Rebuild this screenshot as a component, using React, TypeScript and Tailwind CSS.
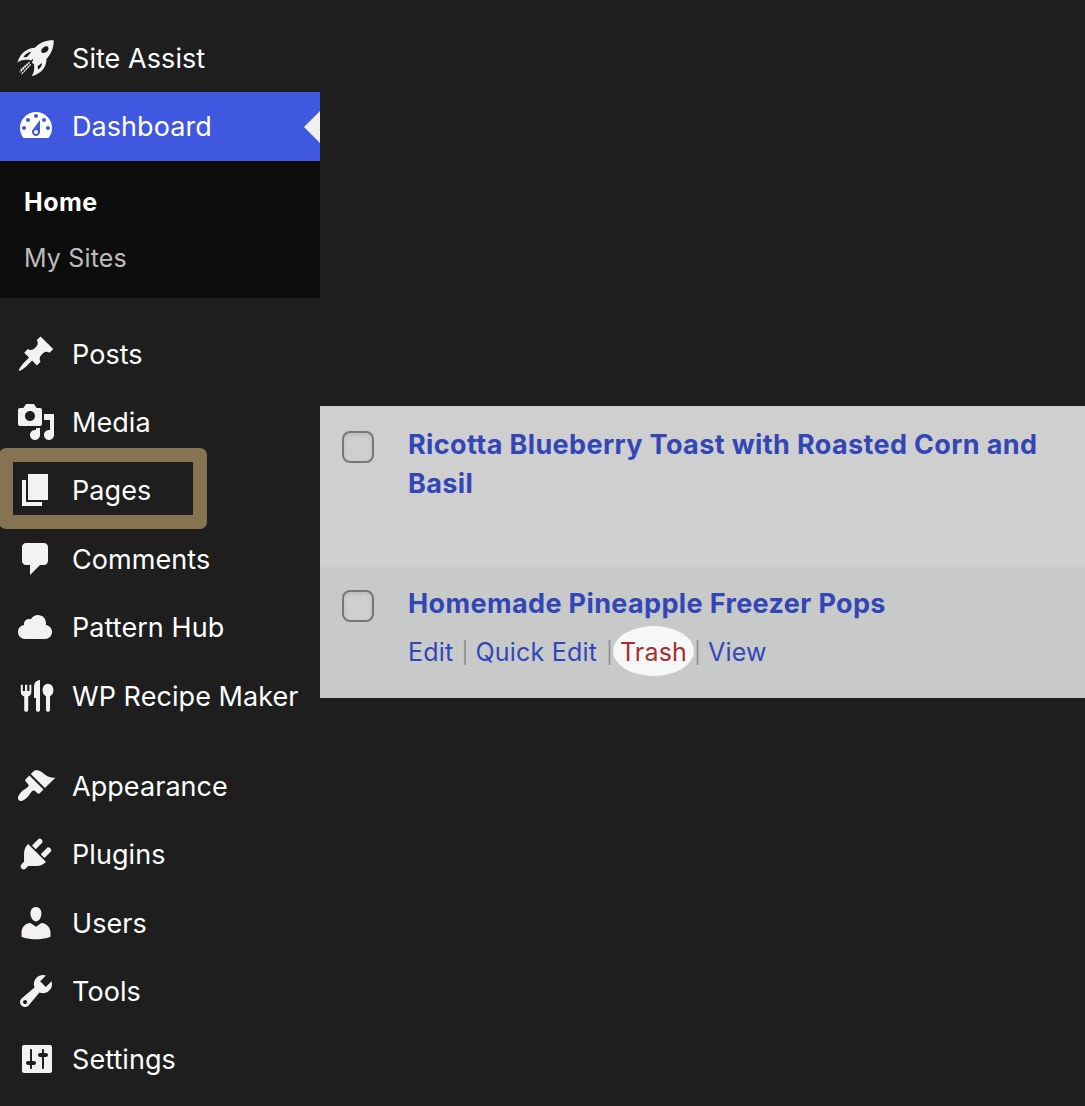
import clsx from 'clsx';

interface MenuEntry {
  label: string;
  icon: keyof typeof ICON_PATH;
  current?: boolean;
  highlighted?: boolean;
}

const ICON_PATH = {
  dashboard:
    'M3.76 16h12.48c1.1-1.37 1.76-3.11 1.76-5 0-4.42-3.58-8-8-8s-8 3.58-8 8c0 1.89.66 3.63 1.76 5zM10 4c.55 0 1 .45 1 1s-.45 1-1 1-1-.45-1-1 .45-1 1-1zM6 6c.55 0 1 .45 1 1s-.45 1-1 1-1-.45-1-1 .45-1 1-1zm8 0c.55 0 1 .45 1 1s-.45 1-1 1-1-.45-1-1 .45-1 1-1zm-5.37 5.55L12 7v6c0 1.1-.9 2-2 2s-2-.9-2-2c0-.57.24-1.08.63-1.45zM4 10c.55 0 1 .45 1 1s-.45 1-1 1-1-.45-1-1 .45-1 1-1zm12 0c.55 0 1 .45 1 1s-.45 1-1 1-1-.45-1-1 .45-1 1-1zm-5 3c0-.55-.45-1-1-1s-1 .45-1 1 .45 1 1 1 1-.45 1-1z',
  posts:
    'M10.44 3.02l1.82-1.82 6.36 6.35-1.83 1.82c-1.05-.68-2.48-.57-3.41.36l-.75.75c-.92.93-1.04 2.35-.35 3.41l-1.83 1.82-2.41-2.41-2.8 2.79c-.42.42-3.38 2.71-3.8 2.29s1.86-3.39 2.28-3.81l2.79-2.79L4.1 9.36l1.83-1.82c1.05.69 2.48.57 3.4-.36l.75-.75c.93-.92 1.05-2.35.36-3.41z',
  media:
    'M13 11V4c0-.55-.45-1-1-1h-1.67L9 1H5L3.67 3H2c-.55 0-1 .45-1 1v7c0 .55.45 1 1 1h10c.55 0 1-.45 1-1zM7 4.5c1.38 0 2.5 1.12 2.5 2.5S8.38 9.5 7 9.5 4.5 8.38 4.5 7 5.62 4.5 7 4.5zM14 6h5v10.5c0 1.38-1.12 2.5-2.5 2.5S14 17.88 14 16.5s1.12-2.5 2.5-2.5c.17 0 .34.02.5.05V9h-3V6zm-4 8.05V13h2v3.5c0 1.38-1.12 2.5-2.5 2.5S7 17.88 7 16.5 8.12 14 9.5 14c.17 0 .34.02.5.05z',
  pages: 'M6 15V2h10v13H6zm-1 1h8v2H3V5h2v11z',
  comments:
    'M5 2h9c1.1 0 2 .9 2 2v7c0 1.1-.9 2-2 2h-2l-5 5v-5H5c-1.1 0-2-.9-2-2V4c0-1.1.9-2 2-2z',
  cloud:
    'M14.9 9c1.8.2 3.1 1.7 3.1 3.5 0 1.9-1.6 3.5-3.5 3.5h-10C2.6 16 1 14.4 1 12.5 1 10.7 2.3 9.3 4.1 9 4 8.9 4 8.7 4 8.5 4 7.1 5.1 6 6.5 6c.3 0 .7.1.9.2C8.1 4.9 9.4 4 11 4c2.2 0 4 1.8 4 4 0 .4-.1.7-.1 1z',
  appearance:
    'M14.48 11.06L7.41 3.99l1.5-1.5c.5-.56 2.3-.47 3.51.32 1.21.8 1.43 1.28 2.91 2.1 1.18.64 2.45 1.26 4.45.85zm-.71.71L6.7 4.7 4.93 6.47c-.39.39-.39 1.02 0 1.41l1.06 1.06c.39.39.39 1.03 0 1.42-.6.6-1.43 1.11-2.21 1.69-.35.26-.7.53-1.01.84C1.43 14.23.4 16.08 1.4 17.07c.99 1 2.84-.03 4.18-1.36.31-.31.58-.66.85-1.02.57-.78 1.08-1.61 1.69-2.21.39-.39 1.02-.39 1.41 0l1.06 1.06c.39.39 1.02.39 1.41 0z',
  plugins:
    'M13.11 4.36L9.87 7.6 8 5.73l3.24-3.24c.35-.34 1.05-.2 1.56.32.52.51.66 1.21.31 1.55zm-8 1.77l.91-1.12 9.01 9.01-1.19.84c-.71.71-2.63 1.16-3.82 1.16H6.14L4.9 17.26c-.59.59-1.54.59-2.12 0-.59-.58-.59-1.53 0-2.12l1.24-1.24v-3.88c0-1.13.4-3.19 1.09-3.89zm7.26 3.97l3.24-3.24c.34-.35 1.04-.21 1.55.31.52.51.66 1.21.31 1.55l-3.24 3.25z',
  users:
    'M10 9.25c-2.27 0-2.73-3.44-2.73-3.44C7 4.02 7.82 2 9.97 2c2.16 0 2.98 2.02 2.71 3.81 0 0-.41 3.44-2.68 3.44zm0 2.57L12.72 10c2.39 0 4.52 2.33 4.52 4.53v2.49s-3.65 1.13-7.24 1.13c-3.65 0-7.24-1.13-7.24-1.13v-2.49c0-2.25 1.94-4.48 4.47-4.48z',
  tools:
    'M16.68 9.77c-1.34 1.34-3.3 1.67-4.95.99l-5.41 6.52c-.99.99-2.59.99-3.58 0s-.99-2.59 0-3.57l6.52-5.42c-.68-1.65-.35-3.61.99-4.95 1.28-1.28 3.12-1.62 4.72-1.06l-2.89 2.89 2.82 2.82 2.86-2.87c.53 1.58.18 3.39-1.08 4.65zM3.81 16.21c.4.39 1.04.39 1.43 0 .4-.4.4-1.04 0-1.43-.39-.4-1.03-.4-1.43 0-.39.39-.39 1.03 0 1.43z',
  settings:
    'M18 16V4c0-.55-.45-1-1-1H4c-.55 0-1 .45-1 1v12c0 .55.45 1 1 1h13c.55 0 1-.45 1-1zM8 11h1c.55 0 1 .45 1 1s-.45 1-1 1H8v1.5c0 .28-.22.5-.5.5s-.5-.22-.5-.5V13H6c-.55 0-1-.45-1-1s.45-1 1-1h1V5.5c0-.28.22-.5.5-.5s.5.22.5.5V11zm5-2h-1c-.55 0-1-.45-1-1s.45-1 1-1h1V5.5c0-.28.22-.5.5-.5s.5.22.5.5V7h1c.55 0 1 .45 1 1s-.45 1-1 1h-1v5.5c0 .28-.22.5-.5.5s-.5-.22-.5-.5V9z',
  cutlery:
    'M2.4 4.4h1v3.1h1.1V4.4h1.1v3.1h1.1V4.4h1v3.5c0 1.2-.6 2-1.6 2.300V17c0 .6-.4.9-1 .9s-1-.3-1-.9v-6.8c-1.1-.3-1.7-1.1-1.7-2.3zM12 2v15c0 .6-.4.9-1 .9s-1-.3-1-.9v-6H9V5.500C9 3.300 10 2.200 12 2zM16 3.900c1.600 0 2.700 1.400 2.700 3.200 0 1.400-.7 2.600-1.700 3V17c0 .6-.4.9-1 .9s-1-.3-1-.9v-6.900c-1-.4-1.700-1.600-1.700-3 0-1.800 1.100-3.200 2.700-3.200z',
};

const CONTENT_MENU: MenuEntry[] = [
  { label: 'Posts', icon: 'posts' },
  { label: 'Media', icon: 'media' },
  { label: 'Pages', icon: 'pages', highlighted: true },
  { label: 'Comments', icon: 'comments' },
  { label: 'Pattern Hub', icon: 'cloud' },
  { label: 'WP Recipe Maker', icon: 'cutlery' },
];

const ADMIN_MENU: MenuEntry[] = [
  { label: 'Appearance', icon: 'appearance' },
  { label: 'Plugins', icon: 'plugins' },
  { label: 'Users', icon: 'users' },
  { label: 'Tools', icon: 'tools' },
  { label: 'Settings', icon: 'settings' },
];

function RocketIcon() {
  return (
    <svg viewBox="0 0 120 120" className="size-10 text-[#f3f1f1]" fill="currentColor">
      <path
        fillRule="evenodd"
        d="M113 7C92 6 72 14 58 28C50 36 42 48 36 60L43 68L52 62L48 74L60 84C72 79 84 71 94 60C107 45 114 26 113 7ZM95 26c5 4 2 12-4 16s-13 4-15 0c-2-5 3-12 8-15s8-3 11-1Z"
      />
      <path
        fillRule="evenodd"
        d="M62 29C38 28 14 40 4 74C14 66 24 64 38 66ZM46 42L33 57L22 58C27 48 36 42 46 42Z"
      />
      <path
        fillRule="evenodd"
        d="M91 58C94 86 78 106 47 115C54 104 56 94 54 81ZM78 75L65 84L66 95C74 90 78 84 78 75Z"
      />
      <path
        d="M41 73L11 103M44 79L16 109M35 77L14 96"
        fill="none"
        stroke="currentColor"
        strokeWidth="4"
        strokeDasharray="6 2"
      />
    </svg>
  );
}

function MenuRow({ label, icon, current, highlighted }: MenuEntry) {
  return (
    <li
      className={clsx(
        'relative flex items-center text-white',
        current ? 'h-[69px] bg-[#4057e0] pb-px' : 'h-[68.4px]'
      )}
    >
      <span className="flex w-18 shrink-0 justify-center">
        <svg
          viewBox="0 0 20 20"
          className={clsx('size-10', current ? 'text-white' : 'text-[#f3f1f1]')}
          fill="currentColor"
          fillRule="evenodd"
        >
          <path d={ICON_PATH[icon]} />
        </svg>
      </span>
      <span className={clsx('whitespace-nowrap', !current && 'pt-px')}>{label}</span>
      {current && (
        <span className="mt-0.5 ml-auto h-8 w-4 bg-[#f0f0f1] [clip-path:polygon(100%_0,100%_100%,0_50%)]" />
      )}
      {highlighted && (
        <span className="absolute -top-[8.6px] -left-px h-[81px] w-[207.5px] rounded-[7px] border-[14px] border-[#857352]" />
      )}
    </li>
  );
}

function Sidebar() {
  return (
    <nav className="w-80 shrink-0 pt-6 text-[27px] leading-none font-[430] tracking-[0.06px]">
      <ul>
        <li className="flex h-[68px] items-center text-white">
          <span className="flex w-18 justify-center">
            <RocketIcon />
          </span>
          Site Assist
        </li>
        <MenuRow label="Dashboard" icon="dashboard" current />
      </ul>
      <ul className="h-[137px] bg-[#0c0c0c] pt-[13px] pl-6 text-[25px] tracking-[0.15px]">
        <li className="flex h-14 items-center font-bold tracking-[0.5px] text-white">Home</li>
        <li className="flex h-14 items-center text-[#bcbcbc]">My Sites</li>
      </ul>
      <ul className="pt-[21.4px]">
        {CONTENT_MENU.map((entry) => (
          <MenuRow key={entry.label} {...entry} />
        ))}
      </ul>
      <ul className="pt-[21.8px]">
        {ADMIN_MENU.map((entry) => (
          <MenuRow key={entry.label} {...entry} />
        ))}
      </ul>
    </nav>
  );
}

function Checkbox() {
  return (
    <span className="size-8 shrink-0 rounded-lg border-2 border-[#76777b] bg-[#cfcfcf] shadow-[inset_0_2px_4px_rgba(0,0,0,0.1)]" />
  );
}

function Separator({ className }: { className: string }) {
  return <span className={clsx('text-[21px] text-[#8e8f8f]', className)}>|</span>;
}

function PostList() {
  return (
    <main className="mt-[406px] h-[292px] min-w-0 flex-1 text-[#3346b8]">
      <article className="flex h-[161px] gap-[34px] border-t border-[#c6c6c6] bg-[#cfcfcf] pt-6 pl-[22px]">
        <Checkbox />
        <h2 className="-mt-[6px] text-[27px] leading-[39px] font-[650] tracking-[0.37px] whitespace-nowrap">
          Ricotta Blueberry Toast with Roasted Corn and
          <br />
          Basil
        </h2>
      </article>
      <article className="flex h-[131px] gap-[34px] bg-[#c8cac9] pt-[23px] pl-[22px]">
        <Checkbox />
        <div>
          <h2 className="-mt-[6px] text-[27px] leading-[39px] font-[650] tracking-[0.37px] whitespace-nowrap">
            Homemade Pineapple Freezer Pops
          </h2>
          <div className="mt-[10px] flex h-[38px] items-center text-[25px] leading-none font-[430] tracking-[0.2px] whitespace-nowrap">
            <span className="w-[53.5px]">Edit</span>
            <Separator className="w-[14px]" />
            <span className="w-[130.5px]">Quick Edit</span>
            <Separator className="w-[7px]" />
            <span className="-mt-[3px] flex h-[50px] w-[81px] items-center justify-center rounded-[50%] bg-[#f6f8f7] pt-[3px] text-[#a5302f]">
              Trash
            </span>
            <Separator className="w-[14px]" />
            <span>View</span>
          </div>
        </div>
      </article>
    </main>
  );
}

export default function App() {
  return (
    <div className="flex h-[1106px] w-[1085px] items-start overflow-hidden bg-[#1e1e1e] font-['Inter',sans-serif]">
      <Sidebar />
      <PostList />
    </div>
  );
}
